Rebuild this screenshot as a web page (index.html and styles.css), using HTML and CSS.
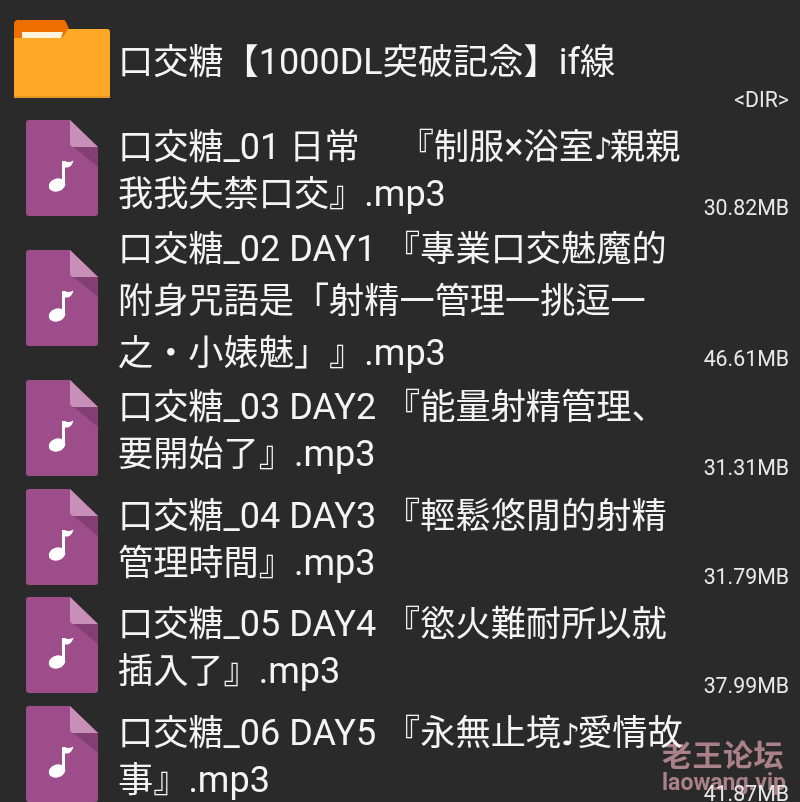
FILE: index.html
```html
<!DOCTYPE html>
<html lang="ja">
<head>
<meta charset="utf-8">
<title>Files</title>
<link rel="stylesheet" href="styles.css">
</head>
<body>
<svg class="defs" width="0" height="0" aria-hidden="true">
  <symbol id="audio" viewBox="0 0 72 96">
    <path d="M3 0H44L72 27V93a3 3 0 0 1-3 3H3a3 3 0 0 1-3-3V3a3 3 0 0 1 3-3Z" fill="#9e4d8b"/>
    <path d="M44 24L72 27V47Z" fill="#833f74"/>
    <path d="M44 0L72 27H48a4 4 0 0 1-4-4Z" fill="#c88fb9"/>
    <ellipse cx="31" cy="65" rx="8.500" ry="6.500" transform="rotate(-20 31 65)" fill="#fff"/>
    <path d="M36 41H39C41 43 44 42 47.500 40.500C46 46 43 48 39 47.500V66H36Z" fill="#fff"/>
  </symbol>
</svg>
<main class="list">
  <div class="row row-dir">
    <div class="icon">
      <svg class="folder" viewBox="0 0 96 78" aria-hidden="true">
        <path d="M0 4a4 4 0 0 1 4-4H49a3 3 0 0 1 3 2L55 9V18H0Z" fill="#ee6e00"/>
        <path d="M8 12H49L47 18H8Z" fill="#fff3dc"/>
        <path d="M0 18H48L54 9H93a3 3 0 0 1 3 3V78H0Z" fill="#ffa726"/>
        <path d="M0 76H96V78H0Z" fill="#e59522"/>
      </svg>
    </div>
    <div class="name">口交糖【<span class="lat">1000DL</span>突破記念】<span class="lat">if</span>線</div>
    <div class="size">&lt;DIR&gt;</div>
  </div>
  <div class="row">
    <div class="icon"><svg class="audio"><use href="#audio"/></svg></div>
    <div class="name">口交糖<span class="lat">_01 </span>日常　<span class="lat gap"> </span>『制服<span class="lat">×</span>浴室<span class="note">♪</span>親親<br>我我失禁口交』<span class="lat">.mp3</span></div>
    <div class="size">30.82MB</div>
  </div>
  <div class="row row-long">
    <div class="icon"><svg class="audio"><use href="#audio"/></svg></div>
    <div class="name">口交糖<span class="lat">_02 DAY1 </span>『專業口交魅魔的<br>附身咒語是「射精一管理一挑逗一<br>之・小婊魅」』<span class="lat">.mp3</span></div>
    <div class="size">46.61MB</div>
  </div>
  <div class="row">
    <div class="icon"><svg class="audio"><use href="#audio"/></svg></div>
    <div class="name">口交糖<span class="lat">_03 DAY2 </span>『能量射精管理、<br>要開始了』<span class="lat">.mp3</span></div>
    <div class="size">31.31MB</div>
  </div>
  <div class="row">
    <div class="icon"><svg class="audio"><use href="#audio"/></svg></div>
    <div class="name">口交糖<span class="lat">_04 DAY3 </span>『輕鬆悠閒的射精<br>管理時間』<span class="lat">.mp3</span></div>
    <div class="size">31.79MB</div>
  </div>
  <div class="row">
    <div class="icon"><svg class="audio"><use href="#audio"/></svg></div>
    <div class="name">口交糖<span class="lat">_05 DAY4 </span>『慾火難耐所以就<br>插入了』<span class="lat">.mp3</span></div>
    <div class="size">37.99MB</div>
  </div>
  <div class="row">
    <div class="icon"><svg class="audio"><use href="#audio"/></svg></div>
    <div class="name">口交糖<span class="lat">_06 DAY5 </span>『永無止境<span class="note">♪</span>愛情故<br>事』<span class="lat">.mp3</span></div>
    <div class="size">41.87MB</div>
  </div>
</main>
<div class="mark">
  <div class="mark-cn">老王论坛</div>
  <div class="mark-en">laowang.vip</div>
</div>
</body>
</html>
```
FILE: styles.css
```css
* { box-sizing: border-box; }
html, body { margin: 0; height: 100%; }
body {
  width: 800px;
  height: 802px;
  overflow: hidden;
  position: relative;
  background: #2a2a2a;
  color: #f4f4f4;
  font-family: Roboto, "Noto Sans CJK JP", sans-serif;
}
.defs { position: absolute; }
.list {
  position: relative;
  z-index: 1;
  filter: blur(.4px);
}
.row {
  display: flex;
  height: 108.7px;
  padding-right: 11px;
}
.row-dir { height: 113.8px; }
.row-long { height: 151px; }
.icon {
  flex: none;
  width: 118px;
  display: flex;
  align-items: center;
}
.folder { width: 96px; height: 78px; margin-left: 14px; }
.audio { width: 72px; height: 96px; margin-left: 26px; }
.row-dir .icon { padding-top: 4px; }
.name {
  flex: none;
  width: 567px;
  font-family: "Noto Sans CJK JP", sans-serif;
  font-size: 35.2px;
  font-weight: 400;
  line-height: 47px;
  align-self: center;
  white-space: pre;
  padding-bottom: 2px;
  text-spacing-trim: space-all;
}
.lat {
  font-family: Roboto, sans-serif;
  font-size: 36px;
  font-weight: 400;
  line-height: 0;
}
.gap { letter-spacing: -5px; }
.note {
  font-family: "DejaVu Sans", sans-serif;
  font-size: 30px;
  line-height: 0;
  letter-spacing: -3px;
}
.row-dir .name { padding: 3px 0 0; }
.row-long .name { line-height: 52px; padding: 0; }
.size {
  flex: 1;
  text-align: right;
  align-self: flex-end;
  font-size: 21.300px;
  line-height: 24px;
  margin-left: -40px;
  margin-bottom: 2px;
  white-space: nowrap;
  color: #e8e8e8;
}
.mark {
  position: absolute;
  left: 662px;
  top: 735px;
  color: #a9808c;
  font-weight: 700;
  filter: blur(.5px);
}
.mark-cn { font-size: 30px; line-height: 36px; font-family: "Noto Sans CJK SC", sans-serif; letter-spacing: .5px; }
.mark-en { font-size: 23px; line-height: 23px; font-family: Roboto, sans-serif; }
```
